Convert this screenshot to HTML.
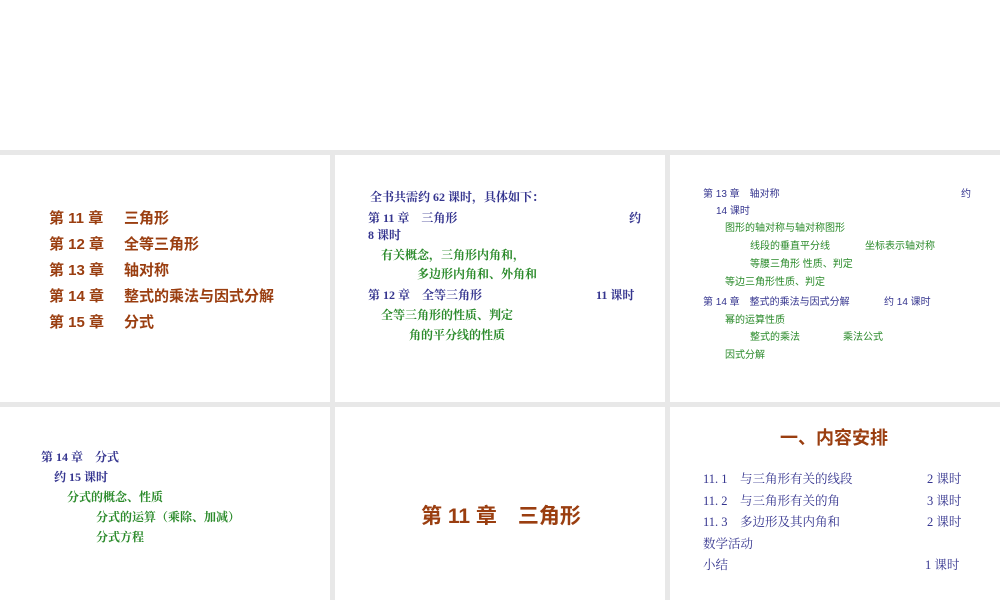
<!DOCTYPE html>
<html><head><meta charset="utf-8"><style>
body{margin:0;width:1000px;height:600px;background:#fff;position:relative;overflow:hidden;font-family:"Liberation Serif","Noto Serif CJK SC","Noto Sans CJK SC",serif}
.g{position:absolute;background:#e8e8e8}
.t{position:absolute;white-space:pre;line-height:1}
.b{color:#9a3e10;font-family:"Liberation Sans","Noto Sans CJK SC",sans-serif;font-weight:bold}
.n{color:#35358f}
.gr{color:#2a8a2a}
.s{font-family:"Liberation Sans","Noto Sans CJK SC",sans-serif}
.w{font-weight:bold}
</style></head><body>
<div class="g" style="left:0;top:150px;width:1000px;height:5px"></div>
<div class="g" style="left:0;top:402px;width:1000px;height:5px"></div>
<div class="g" style="left:330px;top:150px;width:5px;height:450px"></div>
<div class="g" style="left:665px;top:150px;width:5px;height:450px"></div>

<div class="t b" style="left:49px;top:211px;font-size:15px">第 11 章</div><div class="t b" style="left:124px;top:211px;font-size:15px">三角形</div>
<div class="t b" style="left:49px;top:237px;font-size:15px">第 12 章</div><div class="t b" style="left:124px;top:237px;font-size:15px">全等三角形</div>
<div class="t b" style="left:49px;top:263px;font-size:15px">第 13 章</div><div class="t b" style="left:124px;top:263px;font-size:15px">轴对称</div>
<div class="t b" style="left:49px;top:289px;font-size:15px">第 14 章</div><div class="t b" style="left:124px;top:289px;font-size:15px">整式的乘法与因式分解</div>
<div class="t b" style="left:49px;top:315px;font-size:15px">第 15 章</div><div class="t b" style="left:124px;top:315px;font-size:15px">分式</div>

<div class="t n w" style="left:370px;top:191px;font-size:12px">全书共需约 62 课时，具体如下：</div>
<div class="t n w" style="left:368px;top:212px;font-size:12px">第 11 章　三角形</div>
<div class="t n w" style="left:629px;top:212px;font-size:12px">约</div>
<div class="t n w" style="left:368px;top:229px;font-size:12px">8 课时</div>
<div class="t gr w" style="left:381px;top:249px;font-size:12px">有关概念，三角形内角和，</div>
<div class="t gr w" style="left:417px;top:268px;font-size:12px">多边形内角和、外角和</div>
<div class="t n w" style="left:368px;top:289px;font-size:12px">第 12 章　全等三角形</div>
<div class="t n w" style="left:596px;top:289px;font-size:12px">11 课时</div>
<div class="t gr w" style="left:381px;top:309px;font-size:12px">全等三角形的性质、判定</div>
<div class="t gr w" style="left:409px;top:329px;font-size:12px">角的平分线的性质</div>

<div class="t n s" style="left:703px;top:190px;font-size:10px">第 13 章　轴对称</div>
<div class="t n s" style="left:961px;top:190px;font-size:10px">约</div>
<div class="t n s" style="left:716px;top:207px;font-size:10px">14 课时</div>
<div class="t gr s" style="left:725px;top:224px;font-size:10px">图形的轴对称与轴对称图形</div>
<div class="t gr s" style="left:750px;top:242px;font-size:10px">线段的垂直平分线</div>
<div class="t gr s" style="left:865px;top:242px;font-size:10px">坐标表示轴对称</div>
<div class="t gr s" style="left:750px;top:260px;font-size:10px">等腰三角形 性质、判定</div>
<div class="t gr s" style="left:725px;top:278px;font-size:10px">等边三角形性质、判定</div>
<div class="t n s" style="left:703px;top:298px;font-size:10px">第 14 章　整式的乘法与因式分解</div>
<div class="t n s" style="left:884px;top:298px;font-size:10px">约 14 课时</div>
<div class="t gr s" style="left:725px;top:316px;font-size:10px">幂的运算性质</div>
<div class="t gr s" style="left:750px;top:333px;font-size:10px">整式的乘法</div>
<div class="t gr s" style="left:843px;top:333px;font-size:10px">乘法公式</div>
<div class="t gr s" style="left:725px;top:351px;font-size:10px">因式分解</div>

<div class="t n w" style="left:41px;top:451px;font-size:12px">第 14 章　分式</div>
<div class="t n w" style="left:54px;top:471px;font-size:12px">约 15 课时</div>
<div class="t gr w" style="left:67px;top:491px;font-size:12px">分式的概念、性质</div>
<div class="t gr w" style="left:96px;top:511px;font-size:12px">分式的运算（乘除、加减）</div>
<div class="t gr w" style="left:96px;top:531px;font-size:12px">分式方程</div>

<div class="t b" style="left:421px;top:506px;font-size:21px">第 11 章　三角形</div>

<div class="t b" style="left:780px;top:429px;font-size:18px">一、内容安排</div>
<div class="t n" style="left:703px;top:473px;font-size:12.5px">11. 1　与三角形有关的线段</div>
<div class="t n" style="left:927px;top:473px;font-size:12.5px">2 课时</div>
<div class="t n" style="left:703px;top:495px;font-size:12.5px">11. 2　与三角形有关的角</div>
<div class="t n" style="left:927px;top:495px;font-size:12.5px">3 课时</div>
<div class="t n" style="left:703px;top:516px;font-size:12.5px">11. 3　多边形及其内角和</div>
<div class="t n" style="left:927px;top:516px;font-size:12.5px">2 课时</div>
<div class="t n" style="left:703px;top:538px;font-size:12.5px">数学活动</div>
<div class="t n" style="left:703px;top:559px;font-size:12.5px">小结</div>
<div class="t n" style="left:925px;top:559px;font-size:12.5px">1 课时</div>
</body></html>
